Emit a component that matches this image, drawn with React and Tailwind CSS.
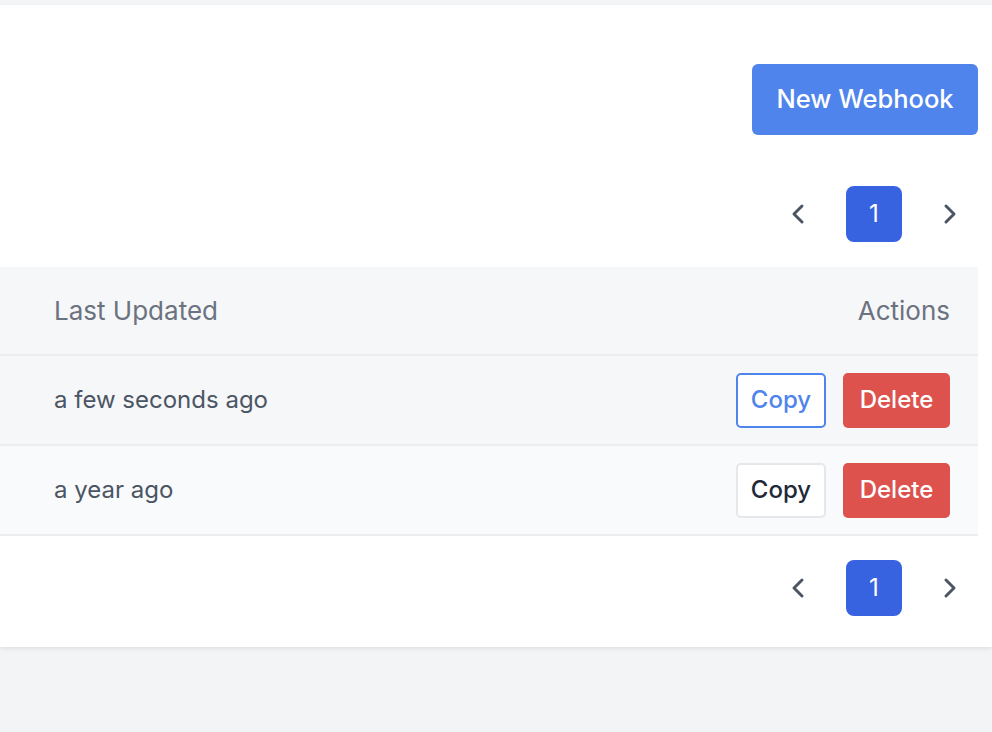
import React from 'react'

const rows = [
  { id: 1, updated: 'a few seconds ago', active: true },
  { id: 2, updated: 'a year ago', active: false },
]

function Chevron({ dir }) {
  return (
    <svg width="14" height="22" viewBox="0 0 14 22" fill="none">
      <polyline
        points={dir === 'left' ? '11,3 3,11 11,19' : '3,3 11,11 3,19'}
        stroke="#4b5563"
        strokeWidth="3"
        strokeLinecap="round"
        strokeLinejoin="round"
      />
    </svg>
  )
}

function Pagination() {
  return (
    <div className="flex justify-end gap-5">
      <button className="flex h-14 w-14 items-center justify-center">
        <Chevron dir="left" />
      </button>
      <button className="flex h-14 w-14 items-center justify-center rounded-lg bg-[#3763e1] text-[24px] text-white">1</button>
      <button className="flex h-14 w-14 items-center justify-center">
        <Chevron dir="right" />
      </button>
    </div>
  )
}

export default function App() {
  return (
    <div className="min-h-[732px] bg-[#f3f4f6] pt-[5px] font-['Inter',sans-serif]">
      <div className="h-[642px] bg-white pr-[14px] pt-[59px] shadow-[0_2px_4px_rgba(0,0,0,0.08)]">
        <div className="flex justify-end">
          <button className="h-[71px] w-[226px] rounded-md bg-[#4f84ec] text-[25.5px] font-medium text-white">New Webhook</button>
        </div>
        <div className="mt-[51px]">
          <Pagination />
        </div>
        <table className="mt-[25px] w-full border-collapse text-[24px]">
          <thead className="bg-[#f6f7f9]">
            <tr className="h-[88px] border-b-2 border-[#ededf1] text-[26px]">
              <th className="pl-[54px] text-left font-normal text-[#6b7280]">Last Updated</th>
              <th className="pr-[28px] text-right font-normal text-[#6b7280]">Actions</th>
            </tr>
          </thead>
          <tbody>
            {rows.map((row) => (
              <tr key={`webhook-${row.id}`} className={`h-[90px] border-b-2 border-[#ededf1] ${row.active ? 'bg-[#f6f7f9]' : 'bg-[#f9fafb]'}`}>
                <td className="pl-[54px] text-[#4b5563]">{row.updated}</td>
                <td className="pr-[28px]">
                  <div className="flex justify-end gap-[17px]">
                    {row.active ? (
                      <button className="h-[55px] w-[90px] rounded-[5px] border-2 border-[#4f84ec] bg-white font-medium text-[#4f84ec]">Copy</button>
                    ) : (
                      <button className="h-[55px] w-[90px] rounded-[5px] border-2 border-[#e5e7eb] bg-white font-medium text-[#1f2937]">Copy</button>
                    )}
                    <button className="h-[55px] w-[107px] rounded-[5px] bg-[#dd524d] font-medium text-white">Delete</button>
                  </div>
                </td>
              </tr>
            ))}
          </tbody>
        </table>
        <div className="mt-[24px]">
          <Pagination />
        </div>
      </div>
    </div>
  )
}
